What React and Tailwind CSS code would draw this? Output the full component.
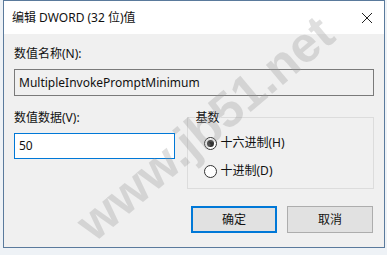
export default function App() {
  const ui = { fontFamily: '"Noto Sans", "Noto Sans CJK SC", sans-serif' }
  return (
    <div className="relative w-[387px] h-[255px] overflow-hidden bg-[#eef2f6]" style={ui}>
      <div className="ml-[3px] w-[382px] h-[248px] border border-[#5a7a9c] bg-[#f0f0f0] flex flex-col">
        {/* Title bar */}
        <div className="h-[33px] bg-white flex items-center justify-between pl-[8px] pr-[10px]">
          <span className="text-[12px] text-[#111] leading-none">编辑 DWORD (32 位)值</span>
          <svg width="12" height="12" viewBox="0 0 12 12" className="mr-[1px]">
            <path d="M1 1 L11 11 M11 1 L1 11" stroke="#222" strokeWidth="1" />
          </svg>
        </div>

        {/* Body */}
        <div className="flex-1 flex flex-col px-[10px] pt-[10px]">
          <span className="text-[12px] text-[#111] leading-[20px]">数值名称(N):</span>
          <div className="mt-[5px] h-[27px] border border-[#7a7a7a] bg-[#f0f0f0] flex items-center pl-[4px] text-[12px] text-[#111]">
            MultipleInvokePromptMinimum
          </div>

          <div className="mt-[12px] flex gap-[12px]">
            <div className="flex flex-col w-[161px]">
              <span className="text-[12px] text-[#111] leading-[20px]">数值数据(V):</span>
              <div className="mt-[5px] h-[26px] border border-[#0078d7] bg-white flex items-center pl-[4px] text-[12px] text-[#111]">
                50
              </div>
            </div>
            <div className="relative mt-[9px] w-[188px] h-[72px] border border-[#dcdcdc] flex flex-col pl-[16px] pt-[16px] gap-[10px]">
              <span className="absolute -top-[10px] left-[7px] px-[1px] bg-[#f0f0f0] text-[12px] text-[#111] leading-[20px]">基数</span>
              <label className="flex items-center gap-[4px] text-[12px] text-[#111] leading-[18px]">
                <span className="w-[13px] h-[13px] rounded-full border border-[#333] bg-white flex items-center justify-center">
                  <span className="w-[7px] h-[7px] rounded-full bg-[#333]" />
                </span>
                十六进制(H)
              </label>
              <label className="flex items-center gap-[4px] text-[12px] text-[#111] leading-[18px]">
                <span className="w-[13px] h-[13px] rounded-full border border-[#333] bg-white" />
                十进制(D)
              </label>
            </div>
          </div>

          <div className="mt-[17px] flex justify-end gap-[10px] pr-[1px]">
            <button className="w-[86px] h-[27px] border-2 border-[#0078d7] bg-[#e1e1e1] text-[12px] text-[#111]">确定</button>
            <button className="w-[86px] h-[27px] border border-[#adadad] bg-[#e1e1e1] text-[12px] text-[#111]">取消</button>
          </div>
        </div>
      </div>

      {/* Watermark */}
      <div
        className="absolute left-[205px] top-[128px] whitespace-nowrap text-[50px] font-bold leading-none text-[rgba(150,150,150,0.3)] pointer-events-none"
        style={{ transform: 'translate(-50%, -50%) rotate(-40deg)', fontFamily: '"Liberation Sans", sans-serif' }}
      >
        www.jb51.net
      </div>
    </div>
  )
}
